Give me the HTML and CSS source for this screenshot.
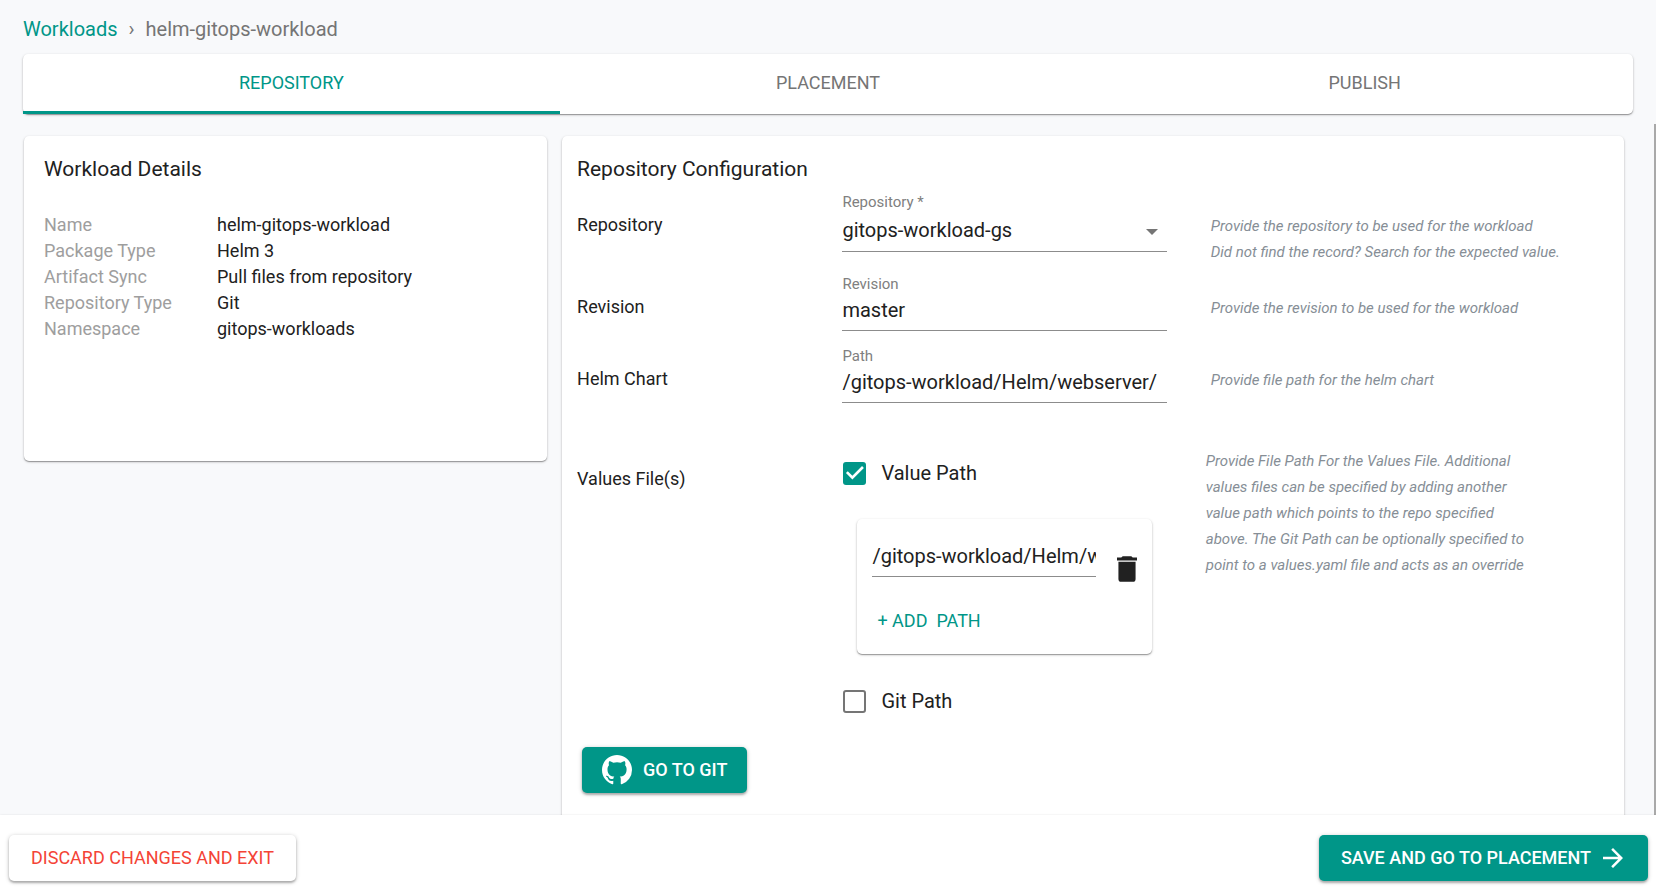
FILE: index.html
```html
<!DOCTYPE html>
<html lang="en">
<head>
<meta charset="utf-8">
<title>helm-gitops-workload</title>
<link rel="stylesheet" href="styles.css">
</head>
<body>
<div class="page">
  <header class="top">
    <nav class="crumbs" aria-label="Breadcrumb">
      <a href="#">Workloads</a><span class="crumb-sep">›</span><span>helm-gitops-workload</span>
    </nav>
    <div class="tabs card" role="tablist">
      <button class="tab tab-active" role="tab" aria-selected="true">REPOSITORY</button>
      <button class="tab" role="tab" aria-selected="false">PLACEMENT</button>
      <button class="tab" role="tab" aria-selected="false">PUBLISH</button>
    </div>
  </header>

  <main class="content">
    <section class="card details">
      <h2 class="title">Workload Details</h2>
      <dl class="facts">
        <dt>Name</dt><dd>helm-gitops-workload</dd>
        <dt>Package Type</dt><dd>Helm 3</dd>
        <dt>Artifact Sync</dt><dd>Pull files from repository</dd>
        <dt>Repository Type</dt><dd>Git</dd>
        <dt>Namespace</dt><dd>gitops-workloads</dd>
      </dl>
    </section>

    <section class="card config">
      <h2 class="title">Repository Configuration</h2>
      <div class="row">
        <div class="row-name">Repository</div>
        <div class="field">
          <label class="field-label" for="repo">Repository *</label>
          <div class="select-wrap">
            <select class="control control-select" id="repo"><option>gitops-workload-gs</option></select>
            <svg class="caret" viewBox="0 0 12 6" aria-hidden="true"><path d="M0 0h12L6 6z"/></svg>
          </div>
        </div>
        <p class="hint">Provide the repository to be used for the workload<br>Did not find the record? Search for the expected value.</p>
      </div>
      <div class="row row-text">
        <div class="row-name">Revision</div>
        <div class="field">
          <label class="field-label" for="rev">Revision</label>
          <input class="control" id="rev" type="text" value="master">
        </div>
        <p class="hint">Provide the revision to be used for the workload</p>
      </div>
      <div class="row row-text">
        <div class="row-name">Helm Chart</div>
        <div class="field">
          <label class="field-label" for="path">Path</label>
          <input class="control" id="path" type="text" value="/gitops-workload/Helm/webserver/">
        </div>
        <p class="hint">Provide file path for the helm chart</p>
      </div>
      <div class="row row-values">
        <div class="row-name">Values File(s)</div>
        <div class="values">
          <label class="check"><input type="checkbox" checked>Value Path</label>
          <div class="card paths">
            <div class="path-line">
              <input class="control" type="text" aria-label="Value path" value="/gitops-workload/Helm/webserver/values.yaml">
              <button class="trash" aria-label="Delete path">
                <svg viewBox="5 3 14 18" aria-hidden="true"><path d="M6 19a2 2 0 0 0 2 2h8a2 2 0 0 0 2-2V7H6z"/><path d="M19 4h-3l-1-1H9L8 4H5v2h14z"/></svg>
              </button>
            </div>
            <button class="add">+ ADD&nbsp; PATH</button>
          </div>
          <label class="check"><input type="checkbox">Git Path</label>
        </div>
        <p class="hint">Provide File Path For the Values File. Additional values files can be specified by adding another value path which points to the repo specified above. The Git Path can be optionally specified to point to a values.yaml file and acts as an override</p>
      </div>
      <button class="btn btn-primary btn-git">
        <svg class="octocat" viewBox="0 0 16 16" aria-hidden="true"><path d="M8 0C3.580 0 0 3.580 0 8c0 3.540 2.290 6.530 5.470 7.590.4.070.55-.17.55-.38 0-.19-.01-.82-.01-1.490-2.010.37-2.530-.49-2.690-.94-.09-.23-.48-.94-.82-1.130-.28-.15-.68-.52-.01-.53.63-.01 1.080.58 1.230.82.72 1.210 1.870.87 2.330.66.07-.52.28-.87.51-1.070-1.780-.2-3.640-.89-3.640-3.950 0-.87.31-1.590.82-2.150-.08-.2-.36-1.020.08-2.120 0 0 .67-.21 2.200.82.64-.18 1.320-.27 2-.27s1.360.09 2 .27c1.530-1.040 2.200-.82 2.200-.82.44 1.100.16 1.920.08 2.120.51.56.82 1.270.82 2.150 0 3.070-1.870 3.750-3.650 3.950.29.25.54.73.54 1.480 0 1.070-.01 1.930-.01 2.200 0 .21.15.46.55.38A8.010 8.010 0 0 0 16 8c0-4.420-3.580-8-8-8z"/></svg>
        GO TO GIT
      </button>
    </section>
    <div class="scroll-thumb"></div>
  </main>

  <footer class="actions">
    <button class="btn btn-discard">DISCARD CHANGES AND EXIT</button>
    <button class="btn btn-primary btn-save">SAVE AND GO TO PLACEMENT
      <svg class="arrow" viewBox="4 4 16 16" aria-hidden="true"><path d="M12 4l-1.410 1.410L16.170 11H4v2h12.170l-5.580 5.590L12 20l8-8z"/></svg>
    </button>
  </footer>
</div>
</body>
</html>
```
FILE: styles.css
```css
* { box-sizing: border-box; }

body {
  margin: 0;
  background: #f8f9fb;
  color: #212121;
  font-family: Roboto, "Liberation Sans", sans-serif;
  font-size: 18px;
  line-height: 26px;
}

button, input, select { font: inherit; color: inherit; }
button { border: 0; padding: 0; background: none; cursor: pointer; }
svg { display: block; fill: currentColor; }

.page {
  height: 100vh;
  display: flex;
  flex-direction: column;
}

.card {
  background: #fff;
  border-radius: 5px;
  box-shadow: 0 1px 3px rgba(0, 0, 0, .2), 0 1px 1px rgba(0, 0, 0, .3);
}

.top { padding: 16px 23px 10px; }

.crumbs {
  display: flex;
  margin-bottom: 12px;
  font-size: 20px;
  color: #757575;
}
.crumbs a { color: #009688; text-decoration: none; }
.crumb-sep { margin: 0 11px; }

.tabs { display: flex; }
.tab {
  flex: 1;
  height: 60px;
  border-bottom: 3px solid transparent;
  color: #757575;
}
.tab-active { border-bottom-color: #009688; color: #009688; }

.content {
  position: relative;
  flex: 1;
  min-height: 0;
  overflow: hidden;
  display: grid;
  grid-template-columns: 33fr 67fr;
  gap: 15px;
  padding: 12px 32px 0 24px;
}
.scroll-thumb {
  position: absolute;
  top: 0;
  right: 0;
  bottom: 0;
  width: 2px;
  background: #a9a9a9;
}

.title {
  margin: 0;
  font-size: 21px;
  font-weight: 400;
}

.details {
  align-self: start;
  padding: 20px 20px 119px;
}
.facts {
  display: grid;
  grid-template-columns: 173px 1fr;
  margin: 30px 0 0;
}
.facts dt { color: #9e9e9e; }
.facts dd { margin: 0; }

.config {
  align-self: start;
  padding: 20px 15px 40px;
}
.config .title { margin-bottom: 10px; }

.row {
  display: grid;
  grid-template-columns: 9fr 11fr 15fr;
  margin-bottom: 9px;
}
.row-text { padding-bottom: 6px; }
.row-name { padding-top: 20px; }

.field-label {
  display: block;
  font-size: 15px;
  line-height: 20px;
  color: #808080;
}
.control {
  display: block;
  width: 100%;
  height: 37px;
  padding: 0 0 4px;
  border: 0;
  border-bottom: 1px solid #8c8c8c;
  border-radius: 0;
  background: transparent;
  font-size: 20px;
  outline: 0;
}
.select-wrap { position: relative; }
.control-select { height: 40px; appearance: none; }
.caret {
  position: absolute;
  top: 17px;
  right: 9px;
  width: 12px;
  height: 6px;
  color: #757575;
  pointer-events: none;
}

.hint {
  margin: 0;
  padding: 21px 0 0 44px;
  font-size: 15px;
  font-style: italic;
  color: #868e96;
}

.row-values { margin: 39px 0 34px; }
.row-values .row-name { padding-top: 18px; }
.row-values .hint { max-width: 364px; padding: 0 0 0 39px; }
.values { padding-top: 13px; }

.check {
  display: flex;
  align-items: center;
  gap: 15px;
  height: 24px;
  padding-left: 1px;
  font-size: 20px;
}
.check input {
  appearance: none;
  width: 23px;
  height: 23px;
  margin: 0;
  border: 2px solid #757575;
  border-radius: 3px;
}
.check input:checked {
  border: 0;
  background: #009688;
}
.check input:checked::before {
  content: "";
  display: block;
  height: 100%;
  background: #fff;
  clip-path: polygon(39% 78%, 11% 50%, 19% 42%, 39% 62%, 81% 20%, 89% 28%);
}

.paths {
  margin: 34px 15px 35px;
  padding: 17px 15px 20px;
}
.path-line {
  display: flex;
  align-items: flex-end;
  gap: 21px;
  margin-bottom: 31px;
}
.path-line .control { flex: 1; min-width: 0; height: 41px; padding: 0; }
.trash { margin-bottom: -5px; }
.trash svg { width: 20px; height: 26px; }
.add { display: block; padding-left: 5px; color: #009688; }

.btn {
  display: flex;
  align-items: center;
  height: 46px;
  padding: 0 20px;
  border-radius: 5px;
  box-shadow: 0 1px 4px rgba(0, 0, 0, .25), 0 2px 2px rgba(0, 0, 0, .2);
}
.btn-primary { background: #009688; color: #fff; font-weight: 500; }
.btn-git { gap: 11px; margin-left: 5px; }
.octocat { width: 30px; height: 30px; }

.actions {
  z-index: 1;
  display: flex;
  justify-content: space-between;
  padding: 20px 8px 7px 9px;
  background: #fff;
  box-shadow: 0 0 2px rgba(0, 0, 0, .1);
}
.btn-discard { padding: 0 22px; background: #fff; color: #f44336; }
.btn-save { gap: 12px; padding: 0 25px 0 22px; }
.arrow { width: 20px; height: 20px; }
```
